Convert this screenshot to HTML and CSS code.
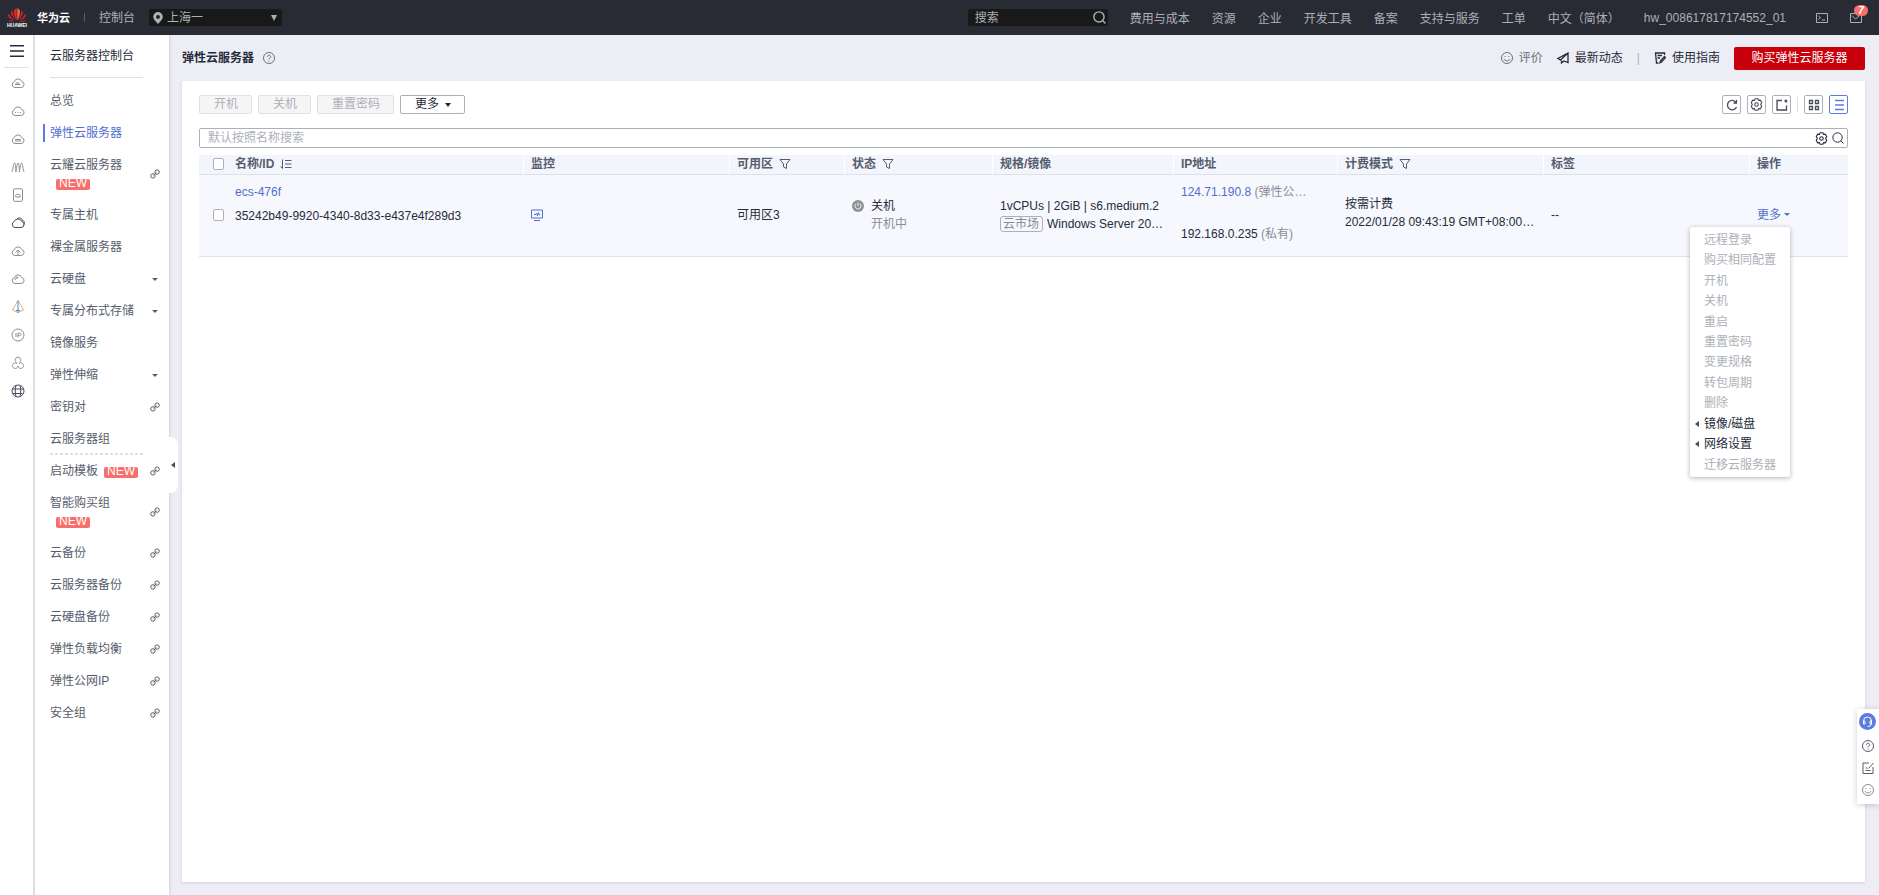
FILE: index.html
```html
<!DOCTYPE html>
<html lang="zh-CN">
<head>
<meta charset="utf-8">
<title>弹性云服务器</title>
<link rel="stylesheet" href="styles.css">
</head>
<body>
<svg class="defs" aria-hidden="true">
  <symbol id="cloud" viewBox="0 0 14 14"><path d="M4 11.500h6.200a3 3 0 0 0 .6-5.900A4 4 0 0 0 3.200 5.700a3 3 0 0 0 .8 5.800z"/></symbol>
  <symbol id="link" viewBox="0 0 10 10"><circle cx="2.900" cy="6.900" r="2.200"/><circle cx="7.100" cy="3.100" r="2.200"/><path d="M3.500 6.300 6.500 3.700"/></symbol>
  <symbol id="filter" viewBox="0 0 12 12"><path d="M1 1.500h10L7.500 6v4.500L4.500 9V6z"/></symbol>
  <symbol id="search" viewBox="0 0 12 12"><circle cx="5.500" cy="5.500" r="4.700"/><path d="m9 9 2.500 2.500"/></symbol>
  <symbol id="gear" viewBox="0 0 12 12"><path d="M4.700.7h2.600l.6 1.500 1.600-.2 1.300 2.200L9.900 6l.9 1.800L9.500 10l-1.600-.2-.6 1.500H4.700l-.6-1.500-1.600.2-1.300-2.200L2.100 6l-.9-1.800L2.500 2l1.600.2z"/><circle cx="6" cy="6" r="1.600"/></symbol>
  <symbol id="help" viewBox="0 0 12 12"><circle cx="6" cy="6" r="5.500"/><path d="M4.400 4.800c0-2.200 3.300-2 3.300 0C7.700 6 6 5.900 6 7.300M6 8.500v1"/></symbol>
  <symbol id="smile" viewBox="0 0 12 12"><circle cx="6" cy="6" r="5.500"/><path d="M4 4v1M8 4v1M3 7c1 2.500 5 2.500 6 0"/></symbol>
</svg>

<header class="topbar">
  <svg class="logo" viewBox="0 0 18 20" aria-label="HUAWEI">
    <g fill="#e5262b">
      <path d="M8.700 12.500C6 8 5.700 4 6.300 2.200 6.800.8 8.300.3 8.700.3z"/><path d="M9.300 12.500C12 8 12.300 4 11.700 2.200 11.200.8 9.700.3 9.300.3z" fill="#f5683f"/>
      <path d="M8 12.700C4.500 9 3 6 3.200 4.500c.1-1 .9-1.700 1.500-1.800C4.500 6 6 9.500 8 12.700z"/><path d="M10 12.700c3.500-3.700 5-6.700 4.800-8.200-.1-1-.9-1.700-1.500-1.800C13.500 6 12 9.500 10 12.700z"/>
      <path d="M7.300 13.300C3.500 11.800.8 9.500.4 8c-.3-1 0-1.800.5-2.300 1.300 3 3.500 5.600 6.400 7.600z"/><path d="M10.700 13.300c3.800-1.500 6.500-3.800 6.900-5.300.3-1 0-1.800-.5-2.300-1.300 3-3.500 5.600-6.400 7.600z"/>
      <path d="M7 14.200c-3.500.3-5.800-.6-6.600-2.700 2 1.300 4.300 2.100 6.600 2.700zM11 14.200c3.500.3 5.800-.6 6.600-2.700-2 1.300-4.300 2.100-6.600 2.700z"/>
    </g>
    <text class="logo-word" x="9" y="19" text-anchor="middle" fill="#fff">HUAWEI</text>
  </svg>
  <strong class="brand">华为云</strong>
  <span class="topbar-rule"></span>
  <a class="console" href="#">控制台</a>
  <div class="region">
    <svg class="pin" viewBox="0 0 10 12"><path fill="#adb0b8" fill-rule="evenodd" d="M5 0a4.800 4.800 0 0 1 4.800 4.800C9.800 7.500 7 9.500 5 12 3 9.500.2 7.500.2 4.800A4.800 4.800 0 0 1 5 0zm0 3a1.900 1.900 0 1 0 0 3.800A1.900 1.900 0 0 0 5 3z"/></svg>
    <select class="region-select" aria-label="区域"><option>上海一</option></select>
    <span class="caret"></span>
  </div>
  <div class="top-search">
    <input type="search" placeholder="搜索" aria-label="搜索">
    <svg class="icon s13"><use href="#search"/></svg>
  </div>
  <nav class="topnav">
    <a href="#">费用与成本</a><a href="#">资源</a><a href="#">企业</a><a href="#">开发工具</a><a href="#">备案</a><a href="#">支持与服务</a><a href="#">工单</a><a href="#">中文（简体）</a>
  </nav>
  <a class="user" href="#">hw_008617817174552_01</a>
  <button class="plain terminal" aria-label="终端"><svg class="icon s12" viewBox="0 0 12 12"><path d="M.5 1.500h11v9H.5zM2.500 4l2 1.700-2 1.700M6 8h3"/></svg></button>
  <button class="plain mail" aria-label="消息"><svg class="icon s12" viewBox="0 0 12 12"><path d="M.5 1.500h11v9H.5zM2 3.500 5.500 7 9 4"/></svg><span class="count">7</span></button>
</header>

<div class="shell">
  <nav class="rail">
    <button class="plain menu-button" aria-label="菜单"><svg viewBox="0 0 14 12"><path stroke="#252b3a" stroke-width="1.500" d="M0 .8h14M0 6h14M0 11.200h14"/></svg></button>
    <a href="#" aria-label="云服务器"><svg class="icon s14"><use href="#cloud"/><path d="M4 8.500h5.500M4.500 7h4"/></svg></a>
    <a href="#" aria-label="云耀"><svg class="icon s14"><use href="#cloud"/><path d="M4 8.500h1M6.500 8.500h1M9 8.500h1"/></svg></a>
    <a href="#" aria-label="裸金属"><svg class="icon s14"><use href="#cloud"/><path d="M4 7.500h6M4 9h6"/></svg></a>
    <a href="#" aria-label="伸缩"><svg class="icon s14" viewBox="0 0 14 14"><path d="M.5 12C2.500 11 2 3 3.500 3s.8 8 2 9M4 12C6 11 5.500 3 7 3s.8 8 2 9M7.500 12c2-1 1.500-9 3-9s1 8 3 9"/></svg></a>
    <a href="#" aria-label="主机"><svg class="icon s14" viewBox="0 0 14 14"><rect x="2.500" y=".8" width="9" height="12.500" rx="1"/><path d="M5 9c-1.500-2 .5-3 2-2.500C9 6 10 8 9 9z"/></svg></a>
    <a class="dark" href="#" aria-label="云"><svg class="icon s14"><use href="#cloud"/><path d="M6 3c2-2 5-1 5.500 1.500C14 5 14 8 12.500 9"/></svg></a>
    <a href="#" aria-label="上传"><svg class="icon s14"><use href="#cloud"/><path d="M7 11.500v-5M4.500 8.500 7 6l2.500 2.500"/></svg></a>
    <a href="#" aria-label="存储"><svg class="icon s14"><use href="#cloud"/><path d="M4 8c0-2 1-3 3-3L5.500 7"/></svg></a>
    <a href="#" aria-label="网络"><svg class="icon s14" viewBox="0 0 14 14"><path d="M7 .5 1.500 10 7 12.500l5.500-2.500z" stroke="#d8ac84"/><path d="M7 .5v12.500M5 10.500h4" stroke="#4c91c4"/></svg></a>
    <a href="#" aria-label="公网IP"><svg class="icon s14" viewBox="0 0 14 14"><circle cx="7" cy="7" r="6"/><path d="M5 5v4M7 9.500V5h1.500c2 0 2 2.500 0 2.500H7"/></svg></a>
    <a href="#" aria-label="安全"><svg class="icon s14" viewBox="0 0 14 14"><path d="M5.500 6.300a2.800 2.800 0 1 1 3 0M6 7.500a2.800 2.800 0 1 0 1 2.500 2.800 2.800 0 1 0 1-2.500"/></svg></a>
    <a class="dark" href="#" aria-label="全球"><svg class="icon s14" viewBox="0 0 14 14"><circle cx="7" cy="7" r="6"/><path d="M1 5h12M1.500 9.500h10M5 1.300C4 5 4 9 5 12.700M9 1.300c1 3.700 1 7.700 0 11.400"/></svg></a>
  </nav>

  <aside class="side">
    <h2 class="side-title">云服务器控制台</h2>
    <ul class="side-list">
      <li><a href="#">总览</a></li>
      <li class="active"><a href="#">弹性云服务器</a></li>
      <li class="tall"><a href="#">云耀云服务器<br><span class="new">NEW</span></a><svg class="icon s10"><use href="#link"/></svg></li>
      <li><a href="#">专属主机</a></li>
      <li><a href="#">裸金属服务器</a></li>
      <li><a href="#">云硬盘</a><span class="caret small"></span></li>
      <li><a href="#">专属分布式存储</a><span class="caret small"></span></li>
      <li><a href="#">镜像服务</a></li>
      <li><a href="#">弹性伸缩</a><span class="caret small"></span></li>
      <li><a href="#">密钥对</a><svg class="icon s10"><use href="#link"/></svg></li>
      <li class="dashed"><a href="#">云服务器组</a></li>
      <li><a href="#">启动模板<span class="new">NEW</span></a><svg class="icon s10"><use href="#link"/></svg></li>
      <li class="tall"><a href="#">智能购买组<br><span class="new">NEW</span></a><svg class="icon s10"><use href="#link"/></svg></li>
      <li><a href="#">云备份</a><svg class="icon s10"><use href="#link"/></svg></li>
      <li><a href="#">云服务器备份</a><svg class="icon s10"><use href="#link"/></svg></li>
      <li><a href="#">云硬盘备份</a><svg class="icon s10"><use href="#link"/></svg></li>
      <li><a href="#">弹性负载均衡</a><svg class="icon s10"><use href="#link"/></svg></li>
      <li><a href="#">弹性公网IP</a><svg class="icon s10"><use href="#link"/></svg></li>
      <li><a href="#">安全组</a><svg class="icon s10"><use href="#link"/></svg></li>
    </ul>
    <button class="plain collapse" aria-label="收起"><span class="left-caret"></span></button>
  </aside>

  <main class="main">
    <div class="page-head">
      <h1>弹性云服务器</h1>
      <svg class="icon s12 muted"><use href="#help"/></svg>
      <div class="head-links">
        <a class="muted" href="#"><svg class="icon s12"><use href="#smile"/></svg>评价</a>
        <a href="#"><svg class="icon s12 thick" viewBox="0 0 12 12"><path d="M11 1 1 6.500l2.500 1.500L11 1v9.500L7 9l-2.500 2V8.500"/></svg>最新动态</a>
        <span class="bar">|</span>
        <a href="#"><svg class="icon s12 thick" viewBox="0 0 12 12"><path d="M10.500 3V1H1.500l1 10h2M3.500 3.500H8M3.500 6H6M6 10.800l.5-2L10.500 4.500l1 1.200-4 4.300z"/></svg>使用指南</a>
      </div>
      <button class="buy">购买弹性云服务器</button>
    </div>

    <section class="card">
      <div class="toolbar">
        <button class="btn" disabled>开机</button>
        <button class="btn" disabled>关机</button>
        <button class="btn" disabled>重置密码</button>
        <button class="btn">更多<span class="caret tiny"></span></button>
        <div class="tools">
          <button class="tool" aria-label="刷新"><svg class="icon s12 thick" viewBox="0 0 12 12"><path d="M10 3.300A4.700 4.700 0 1 0 10.500 8M10.500 1v3h-3"/></svg></button>
          <button class="tool" aria-label="设置"><svg class="icon s13"><use href="#gear"/></svg></button>
          <button class="tool" aria-label="导出"><svg class="icon s12 thick" viewBox="0 0 12 12"><path d="M6 1.500H1v9.500h9.500V6.500M8.500 1.500h2v2M10.300 1.700 9 3"/></svg></button>
          <span class="tool-rule"></span>
          <button class="tool" aria-label="卡片"><svg class="icon s12 thick" viewBox="0 0 12 12"><path d="M1.500 1.500h3v3h-3zM7.500 1.500h3v3h-3zM1.500 7.500h3v3h-3zM7.500 7.500h3v3h-3z"/></svg></button>
          <button class="tool on" aria-label="列表"><svg class="icon s12 thick" viewBox="0 0 12 12"><path d="M2 1.500h9M2 6h9M2 10.500h9"/></svg></button>
        </div>
      </div>

      <div class="filter">
        <input type="text" placeholder="默认按照名称搜索" aria-label="默认按照名称搜索">
        <svg class="icon s13"><use href="#gear"/></svg>
        <svg class="icon s12"><use href="#search"/></svg>
      </div>

      <table class="grid">
        <colgroup><col class="c-check"><col class="c-name"><col class="c-wide"><col class="c-zone"><col class="c-state"><col class="c-spec"><col class="c-ip"><col class="c-wide"><col class="c-wide"><col class="c-op"></colgroup>
        <thead>
          <tr>
            <th class="check"><input type="checkbox" aria-label="全选"></th>
            <th class="name">名称/ID<svg class="icon s12" viewBox="0 0 12 12"><path d="M2.500 1.500v9L.5 8.500M5 2.500h6.500M5 6h6.500M5 9.500h6.500"/></svg></th>
            <th>监控</th>
            <th>可用区<svg class="icon s12"><use href="#filter"/></svg></th>
            <th>状态<svg class="icon s12"><use href="#filter"/></svg></th>
            <th>规格/镜像</th>
            <th>IP地址</th>
            <th>计费模式<svg class="icon s12"><use href="#filter"/></svg></th>
            <th>标签</th>
            <th>操作</th>
          </tr>
        </thead>
        <tbody>
          <tr>
            <td class="check"><input type="checkbox" aria-label="选择 ecs-476f"></td>
            <td class="name"><a href="#">ecs-476f</a><p>35242b49-9920-4340-8d33-e437e4f289d3</p></td>
            <td><a href="#" aria-label="监控"><svg class="icon s12" viewBox="0 0 12 12"><path d="M.5 1h11v8H.5zM3 11.500h6M3 5.500h1.500L5.500 4l1 3L7.500 3.500l.5 2h1"/></svg></a></td>
            <td>可用区3</td>
            <td><div class="state"><svg class="s12" viewBox="0 0 12 12"><circle cx="6" cy="6" r="6" fill="#8f9093"/><path d="M4 3.700a3 3 0 1 0 4 0M6 2.500v3.500" fill="none" stroke="#eee"/></svg><span>关机</span><span class="sub">开机中</span></div></td>
            <td><p>1vCPUs | 2GiB | s6.medium.2</p><p><span class="market">云市场</span>Windows Server 20…</p></td>
            <td class="ips"><p><a href="#">124.71.190.8</a> <span class="sub">(弹性公…</span></p><p>192.168.0.235 <span class="sub">(私有)</span></p></td>
            <td class="billing"><p>按需计费</p><p>2022/01/28 09:43:19 GMT+08:00…</p></td>
            <td>--</td>
            <td class="ops">
              <button class="plain row-more">更多<span class="caret small"></span></button>
              <menu class="dropdown">
                <li><button disabled>远程登录</button></li>
                <li><button disabled>购买相同配置</button></li>
                <li><button disabled>开机</button></li>
                <li><button disabled>关机</button></li>
                <li><button disabled>重启</button></li>
                <li><button disabled>重置密码</button></li>
                <li><button disabled>变更规格</button></li>
                <li><button disabled>转包周期</button></li>
                <li><button disabled>删除</button></li>
                <li><button><span class="left-caret"></span>镜像/磁盘</button></li>
                <li><button><span class="left-caret"></span>网络设置</button></li>
                <li><button disabled>迁移云服务器</button></li>
              </menu>
            </td>
          </tr>
        </tbody>
      </table>
    </section>
  </main>
</div>

<aside class="float">
  <button class="plain" aria-label="客服"><svg class="s17" viewBox="0 0 17 17"><circle cx="8.500" cy="8.500" r="8.500" fill="#5e7ce0"/><path d="M4.500 10V8a4 4 0 0 1 8 0v2M4.500 8v3h1.500V8zM12.500 8v3H11V8zM12 11c0 2-1.500 2.500-3.500 2.500" fill="none" stroke="#fff"/></svg></button>
  <button class="plain" aria-label="帮助"><svg class="icon s12"><use href="#help"/></svg></button>
  <button class="plain" aria-label="建议"><svg class="icon s12" viewBox="0 0 12 12"><path d="M7 1H1v10.500h10V5M11.500 1 6.500 6.500M3.500 6h2M3.500 8.500h5"/></svg></button>
  <button class="plain light" aria-label="评价"><svg class="icon s12"><use href="#smile"/></svg></button>
</aside>
</body>
</html>
```
FILE: styles.css
```css
* { box-sizing: border-box; margin: 0; padding: 0; }
body {
  display: flex;
  flex-direction: column;
  min-height: 100vh;
  background: #edeef5;
  color: #252b3a;
  font: 12px/18px "Liberation Sans", "Noto Sans CJK SC", sans-serif;
}
a { color: inherit; text-decoration: none; }
ul, menu { list-style: none; }
button, input, select { font: inherit; color: inherit; }
svg { flex: none; display: block; }
.defs { position: absolute; width: 0; height: 0; }
.plain { border: 0; background: none; }
.icon { fill: none; stroke: currentColor; }
.thick { stroke-width: 1.3; }
.s10 { width: 10px; height: 10px; }
.s12 { width: 12px; height: 12px; }
.s13 { width: 13px; height: 13px; }
.s14 { width: 14px; height: 14px; }
.s17 { width: 17px; height: 17px; }
.muted { color: #6c7079; }
.sub { color: #8a8e99; }

.caret { flex: none; border: 3px solid transparent; border-top: 6px solid #adb0b8; border-bottom: 0; }
.caret.small { border-width: 3px 3px 0; border-top-color: currentColor; }
.caret.tiny { border-width: 4px 3px 0; border-top-color: currentColor; }
.left-caret { border: 3px solid transparent; border-right: 4px solid #464c59; border-left: 0; }

.topbar {
  display: flex;
  align-items: center;
  flex: none;
  height: 35px;
  padding: 0 17px 0 8px;
  background: #282b33;
  color: #adb0b8;
}
.logo { width: 18px; height: 20px; overflow: visible; }
.logo-word { font-size: 5px; font-weight: bold; }
.brand { margin-left: 11px; color: #fff; font-size: 11px; }
.topbar-rule { width: 1px; height: 9px; margin: 0 14px; background: #575d6c; }
.region, .top-search {
  display: flex;
  align-items: center;
  height: 17px;
  border-radius: 2px;
  background: #191919;
}
.region { width: 133px; margin-left: 14px; padding: 0 5px 0 4px; }
.pin { width: 10px; height: 12px; margin-right: 4px; }
.region-select { flex: 1; height: 17px; border: 0; background: none; appearance: none; outline: 0; }
.top-search { width: 140px; margin: 0 22px 0 auto; padding: 0 2px 0 7px; }
.top-search input { flex: 1; min-width: 0; height: 17px; border: 0; background: none; outline: 0; }
.top-search .icon { stroke-width: 1.3; }
input::placeholder { color: #adb0b8; opacity: 1; }
.topnav { display: flex; gap: 22px; padding-top: 2px; }
.user { margin-left: 24px; }
.terminal { margin-left: 30px; }
.mail { position: relative; margin-left: 22px; }
.count {
  position: absolute;
  left: 4px;
  top: -7px;
  width: 14px;
  height: 11px;
  border-radius: 6px;
  background: #f66f6a;
  color: #fff;
  font: italic bold 10px/11px "Liberation Sans", sans-serif;
}

.shell { display: flex; flex: 1; }
.rail {
  display: flex;
  flex-direction: column;
  align-items: center;
  width: 35px;
  border-right: 2px solid #dfe1e6;
  background: #fff;
  color: #8a8e99;
}
.menu-button {
  display: flex;
  width: 25px;
  height: 33px;
  margin-bottom: 1px;
  padding: 10px 5px 0 6px;
  border-bottom: 1px solid #dfe1e6;
}
.menu-button svg { width: 14px; height: 12px; }
.rail a { display: flex; align-items: center; height: 28px; padding-left: 3px; }
.rail .dark { color: #464c59; }

.side {
  position: relative;
  width: 134px;
  background: #fff;
  box-shadow: 1px 0 3px rgba(40, 50, 80, .15);
}
.side-title {
  height: 43px;
  margin: 0 26px 7px 15px;
  padding-top: 12px;
  border-bottom: 1px solid #dfe1e6;
  font-size: 12px;
  font-weight: normal;
}
.side-list li {
  display: flex;
  align-items: center;
  justify-content: space-between;
  height: 32px;
  padding: 0 9px 0 15px;
  color: #575d6c;
}
.side-list .caret { margin-right: 2px; }
.side-list .tall { height: 50px; }
.side-list .active { position: relative; color: #526ecc; }
.side-list .active::before {
  content: "";
  position: absolute;
  left: 8px;
  top: 7px;
  width: 2px;
  height: 18px;
  background: #5e7ce0;
}
.side-list .dashed {
  margin: 0 26px 0 15px;
  padding: 0;
  background: repeating-linear-gradient(90deg, #dfe1e6 0 3px, transparent 3px 5px) 0 100% / 100% 2px no-repeat;
}
.new {
  display: inline-block;
  width: 34px;
  height: 11px;
  margin-left: 6px;
  border-radius: 2px;
  background: #f66f6a;
  color: #fff;
  line-height: 8px;
  text-align: center;
}
.collapse {
  position: absolute;
  left: 134px;
  top: 402px;
  display: flex;
  align-items: center;
  width: 9px;
  height: 56px;
  padding-left: 2px;
  border-radius: 0 8px 8px 0;
  background: #fff;
}

.main { display: flex; flex-direction: column; flex: 1; min-width: 0; padding: 0 14px 13px 13px; }
.page-head { display: flex; align-items: center; height: 46px; }
h1 { margin-right: 9px; font-size: 12px; }
.head-links { display: flex; align-items: center; gap: 14px; margin: 0 14px 0 auto; }
.head-links a { display: flex; align-items: center; gap: 6px; }
.bar { color: #adb0b8; }
.buy { width: 131px; height: 23px; border: 0; border-radius: 2px; background: #c7000b; color: #fff; line-height: 20px; }
.card { flex: 1; padding: 14px 17px; background: #fff; box-shadow: 0 1px 3px rgba(40, 50, 80, .15); }
.toolbar { display: flex; gap: 6px; height: 19px; margin-bottom: 14px; }
.btn {
  display: flex;
  align-items: center;
  gap: 6px;
  padding: 0 13px 0 14px;
  border: 1px solid #adb0b8;
  border-radius: 2px;
  background: #fff;
  line-height: 17px;
}
.btn:disabled { border-color: #dfe1e6; background: #f5f5f6; color: #adb0b8; }
.tools { display: flex; align-items: center; gap: 6px; margin-left: auto; }
.tool {
  display: flex;
  align-items: center;
  justify-content: center;
  width: 19px;
  height: 19px;
  border: 1px solid #adb0b8;
  border-radius: 2px;
  background: #fff;
  color: #464c59;
}
.tool.on { border-color: #5e7ce0; color: #5e7ce0; }
.tool-rule { width: 1px; height: 15px; background: #dfe1e6; }
.filter {
  display: flex;
  align-items: center;
  gap: 4px;
  height: 20px;
  margin-bottom: 7px;
  padding: 0 3px 0 8px;
  border: 1px solid #adb0b8;
  border-radius: 2px;
}
.filter input { flex: 1; height: 18px; border: 0; outline: 0; background: none; }

.grid { width: 100%; table-layout: fixed; border-collapse: separate; border-spacing: 0; }
.c-check { width: 36px; }
.c-name { width: 288px; }
.c-wide { width: 206px; }
.c-zone { width: 115px; }
.c-state { width: 148px; }
.c-spec { width: 181px; }
.c-ip { width: 164px; }
.c-op { width: 99px; }
th, td { border-bottom: 1px solid #dfe1e6; text-align: left; white-space: nowrap; }
th { height: 20px; padding: 0 0 1px 7px; border-left: 1px solid #fff; background: #f2f5fc; color: #575d6c; line-height: 18px; }
th .icon { display: inline-block; margin-left: 6px; vertical-align: -2px; }
td { height: 82px; padding: 0 0 2px 8px; background: #f6f8fe; }
th.check, th.name { border-left: 0; }
th.name, td.name { padding-left: 0; }
th.check, td.check { padding-left: 14px; }
td a, .row-more { color: #526ecc; }
td.name { line-height: 24px; padding-bottom: 24px; }
.check input {
  display: block;
  width: 11px;
  height: 12px;
  appearance: none;
  border: 1px solid #adb0b8;
  border-radius: 2px;
  background: #fff;
}
.state { display: grid; grid-template-columns: 12px auto; column-gap: 7px; align-items: center; }
.state .sub { grid-column: 2; }
.market {
  display: inline-block;
  margin-right: 4px;
  padding: 0 3px 0 2px;
  border: 1px solid #adb0b8;
  border-radius: 3px;
  color: #8a8e99;
  line-height: 14px;
}
td.ips { padding-bottom: 6px; }
.ips p + p { margin-top: 24px; }
td.billing { padding-bottom: 6px; }
.ops { position: relative; }
.row-more { display: flex; align-items: center; gap: 3px; }
.dropdown {
  position: absolute;
  right: 58px;
  top: 52px;
  display: grid;
  grid-auto-rows: 1fr;
  width: 100px;
  height: 250px;
  padding: 3px 0 2px;
  border-radius: 2px;
  background: #fff;
  box-shadow: 0 1px 5px rgba(0, 0, 0, .3);
}
.dropdown button {
  position: relative;
  display: block;
  width: 100%;
  height: 20px;
  padding-left: 14px;
  border: 0;
  background: none;
  text-align: left;
}
.dropdown button:disabled { color: #adb0b8; }
.dropdown .left-caret { position: absolute; left: 5px; top: 7px; }

.float {
  position: fixed;
  right: 0;
  top: 709px;
  display: flex;
  flex-direction: column;
  justify-content: space-between;
  width: 22px;
  height: 95px;
  padding: 4px 1px 8px 0;
  background: #fff;
  color: #575d6c;
  box-shadow: 0 1px 6px rgba(0, 0, 0, .2);
}
.float svg { margin: 0 auto; }
.float .light { color: #8a8e99; }
```
